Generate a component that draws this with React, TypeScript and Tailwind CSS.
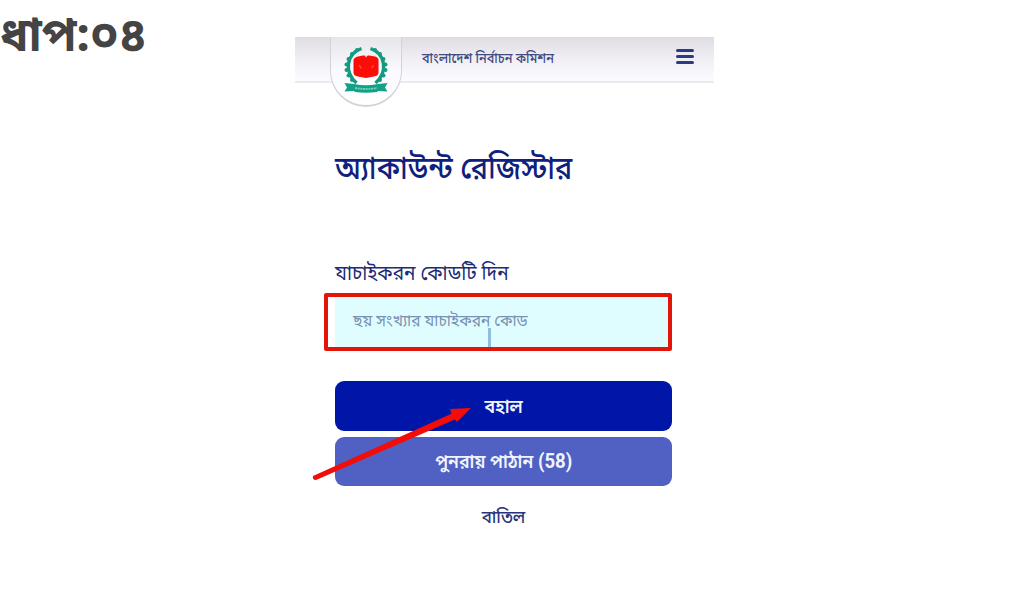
import { ReactNode } from "react";

const LEAVES = [
  [14, 5],
  [9, 9],
  [5.5, 14],
  [3.5, 19.5],
  [3.5, 25],
  [5.5, 30.5],
  [9, 35],
];

function Emblem() {
  return (
    <svg viewBox="0 0 46 50" className="h-[50px] w-[46px]">
      {/* wreath, one half mirrored to the other */}
      <path d="M18.5 3.5 C3 9 1 27 13.5 38" fill="none" stroke="#159a80" strokeWidth="3.4" />
      <path d="M27.5 3.5 C43 9 45 27 32.5 38" fill="none" stroke="#159a80" strokeWidth="3.4" />
      {LEAVES.map(([x, y]) => (
        <g key={y} fill="#159a80">
          <circle cx={x} cy={y} r="2" />
          <circle cx={46 - x} cy={y} r="2" />
        </g>
      ))}
      <path
        d="M10.5 15 Q11 12.5 15 11.5 L20 10.5 L26 10.5 L32 11.5 Q35.5 12.5 35.5 15 L35.5 28 Q35 31 31 31.5 L23 33 L15 31.5 Q11 31 10.5 28 Z"
        fill="#fb0d08"
      />
      <path d="M21.5 10 L23 12.5 L25 10 Z" fill="#f5dddd" />
      <path d="M16 20 L18.5 23.5 M30.5 20 L28.5 23" stroke="#ff4a25" strokeWidth="1.4" />
      <path
        d="M1.5 38 L11 39 Q23 41.5 35 39 L44.5 38 L42 42.5 L44.5 46.5 L35 46 L34 47 Q23 48.5 12 47 L11 46 L1.5 46.5 L4 42.5 Z"
        fill="#12a184"
      />
      <path d="M12 43 Q23 45 34 43" fill="none" stroke="#70d5bd" strokeWidth="1.8" strokeDasharray="2 0.7" />
    </svg>
  );
}

function Button({ children, className }: { children: ReactNode; className: string }) {
  return (
    <button
      className={`flex w-full items-center justify-center rounded-[9px] text-[19px] font-semibold text-[#f1f4ff] ${className}`}
    >
      <span className="scale-x-[.93]">{children}</span>
    </button>
  );
}

export default function App() {
  return (
    <div className="relative flex h-[614px] w-[1024px] overflow-hidden bg-white font-['Noto_Sans_Bengali','Noto_Sans',sans-serif]">
      <h1 className="w-[295px] shrink-0 whitespace-nowrap pt-[11px] text-[47px] leading-[56px] font-bold text-[#444444]">
        ধাপ:০৪
      </h1>

      <main className="relative mt-[37px] w-[419px] shrink-0">
        <header className="flex h-[46px] items-start border-b-2 border-[#e9e9ee] bg-linear-to-b from-[#dfdde2] via-[#f1eff5] to-[#fcfbff]">
          <div className="relative ml-[35px] flex h-[70px] w-[72px] shrink-0 justify-center rounded-b-[36px] border border-t-0 border-b-2 border-[#d2d2d8] bg-linear-to-b from-[#e7e5e9] via-[#fafaff] to-white pt-[8px]">
            <Emblem />
          </div>
          <span className="ml-[20px] origin-left scale-x-[.91] whitespace-nowrap text-[14px] leading-[45px] font-medium text-[#414b82]">
            বাংলাদেশ নির্বাচন কমিশন
          </span>
          <div className="mt-[12px] mr-[20px] ml-auto flex w-[18px] flex-col gap-[3px]">
            <div className="h-[3px] rounded-xs bg-[#2b3b80]" />
            <div className="h-[3px] rounded-xs bg-[#2b3b80]" />
            <div className="h-[3px] rounded-xs bg-[#2b3b80]" />
          </div>
        </header>

        <div className="flex w-[377px] flex-col pl-[40px]">
          <h2 className="mt-[64px] h-[50px] origin-left scale-x-[.93] whitespace-nowrap text-[31px] leading-[50px] font-medium text-[#10207d]">
            অ্যাকাউন্ট রেজিস্টার
          </h2>
          <label className="mt-[62px] h-[32px] origin-left scale-x-[.95] whitespace-nowrap text-[20px] leading-[32px] text-[#202b73]">
            যাচাইকরন কোডটি দিন
          </label>
          <div className="relative mt-[6px] h-[50px] w-[335px] bg-[#dffdff] pl-[18px] text-[16px] leading-[51px] whitespace-nowrap text-[#7890b2]">
            <span className="inline-block origin-left scale-x-[.97]">ছয় সংখ্যার যাচাইকরন কোড</span>
            <div className="absolute top-[31px] left-[153px] h-[19px] w-[3px] bg-[#8fbddb]" />
            <div className="absolute -top-[4px] -left-[11px] h-[58px] w-[348px] rounded-[2px] border-4 border-[#e31408]" />
          </div>
          <Button className="mt-[34px] h-[50px] bg-[#0016a9] pt-[6px]">বহাল</Button>
          <Button className="mt-[6px] h-[49px] bg-[#5061c3] pt-[2px]">
            পুনরায় পাঠান <span className="font-['Roboto'] text-[20px] font-bold">(58)</span>
          </Button>
          <button className="mt-[16px] h-[32px] scale-x-[.94] text-[18px] leading-[32px] font-medium text-[#28347c]">
            বাতিল
          </button>
        </div>

        {/* pointer arrow over the buttons */}
        <svg viewBox="0 0 170 80" className="absolute top-[366px] left-[13px] h-[80px] w-[170px]">
          <path d="M5 73 L145 10 L148 16 L8 77 Q4 77 5 73 Z" fill="#f30c08" />
          <path d="M163 5 L142 6 L144 13 L149 19 Z" fill="#f30c08" />
        </svg>
      </main>
    </div>
  );
}
